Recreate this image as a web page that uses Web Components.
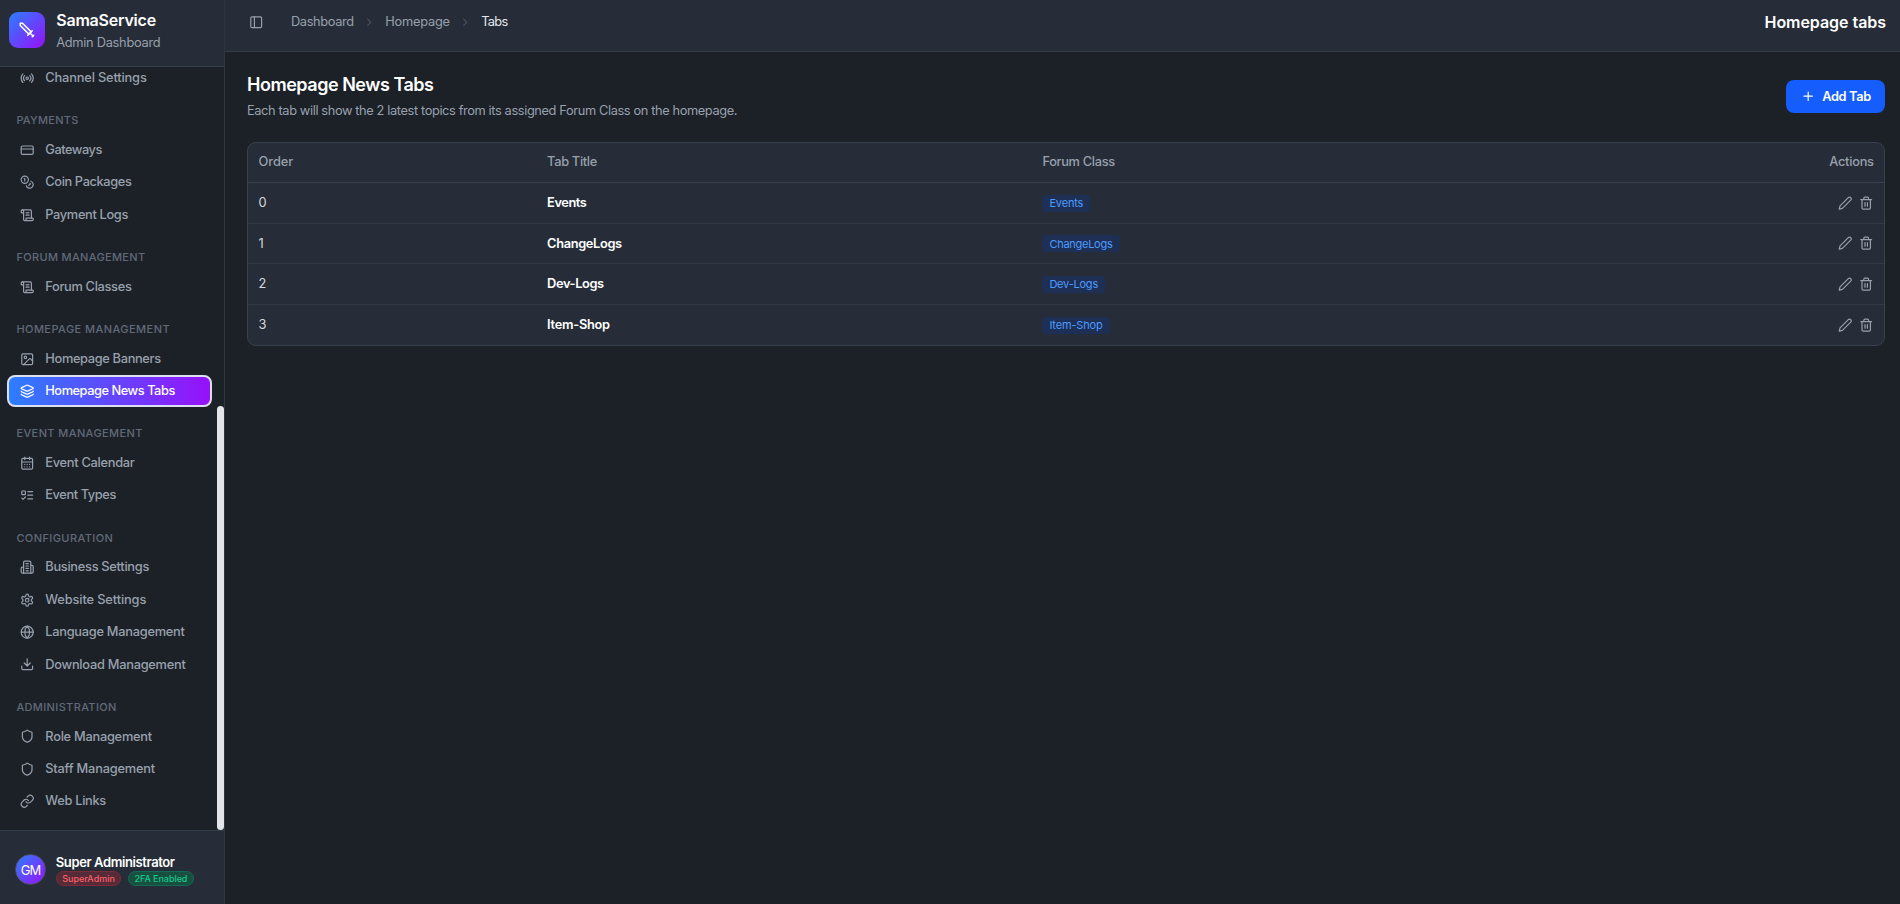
<!DOCTYPE html>
<html lang="en">
<head>
<meta charset="utf-8">
<title>Homepage tabs</title>
<style>
html,body{margin:0;height:100%;overflow:hidden}
body{background:#1c2128;color:#fff;font-family:Inter,"Liberation Sans",sans-serif;font-size:12.8px;line-height:20px}
</style>
</head>
<body>
<admin-app></admin-app>
<script>
const ICONS = {
 sword:'<path d="m11 19-6-6"/><path d="m5 21-2-2"/><path d="m8 16-4 4"/><path d="M9.5 17.5 21 6V3h-3L6.5 14.5"/>',
 radio:'<path d="M4.9 19.1C1 15.2 1 8.8 4.9 4.9"/><path d="M7.8 16.2c-2.3-2.3-2.3-6.1 0-8.5"/><circle cx="12" cy="12" r="2"/><path d="M16.2 7.8c2.3 2.3 2.3 6.1 0 8.5"/><path d="M19.1 4.9C23 8.8 23 15.1 19.1 19"/>',
 card:'<rect width="20" height="14" x="2" y="5" rx="2"/><path d="M2 10h20"/>',
 coins:'<circle cx="8" cy="8" r="6"/><path d="M18.09 10.37A6 6 0 1 1 10.34 18"/><path d="M7 6h1v4"/><path d="m16.71 13.88.7.71-2.82 2.82"/>',
 scroll:'<path d="M15 12h-5"/><path d="M15 8h-5"/><path d="M19 17V5a2 2 0 0 0-2-2H4"/><path d="M8 21h12a2 2 0 0 0 2-2v-1a1 1 0 0 0-1-1H11a1 1 0 0 0-1 1v1a2 2 0 1 1-4 0V5a2 2 0 1 0-4 0v2a1 1 0 0 0 1 1h3"/>',
 image:'<rect width="18" height="18" x="3" y="3" rx="2"/><circle cx="9" cy="9" r="2"/><path d="m21 15-3.1-3.1a2 2 0 0 0-2.8 0L6 21"/>',
 layers:'<path d="M12.83 2.18a2 2 0 0 0-1.66 0L2.6 6.08a1 1 0 0 0 0 1.83l8.58 3.91a2 2 0 0 0 1.66 0l8.58-3.9a1 1 0 0 0 0-1.83z"/><path d="M2 12a1 1 0 0 0 .58.91l8.6 3.91a2 2 0 0 0 1.65 0l8.58-3.9A1 1 0 0 0 22 12"/><path d="M2 17a1 1 0 0 0 .58.91l8.6 3.91a2 2 0 0 0 1.65 0l8.58-3.9A1 1 0 0 0 22 17"/>',
 calendar:'<path d="M8 2v4M16 2v4"/><rect width="18" height="18" x="3" y="4" rx="2"/><path d="M3 10h18M8 14h.01M12 14h.01M16 14h.01M8 18h.01M12 18h.01M16 18h.01"/>',
 todo:'<rect x="3" y="5" width="6" height="6" rx="1"/><path d="m3 17 2 2 4-4M13 6h8M13 12h8M13 18h8"/>',
 building:'<path d="M6 22V4a2 2 0 0 1 2-2h8a2 2 0 0 1 2 2v18Z"/><path d="M6 12H4a2 2 0 0 0-2 2v6a2 2 0 0 0 2 2h2"/><path d="M18 9h2a2 2 0 0 1 2 2v9a2 2 0 0 1-2 2h-2"/><path d="M10 6h4M10 10h4M10 14h4M10 18h4"/>',
 gear:'<path d="M12.22 2h-.44a2 2 0 0 0-2 2v.18a2 2 0 0 1-1 1.73l-.43.25a2 2 0 0 1-2 0l-.15-.08a2 2 0 0 0-2.73.73l-.22.38a2 2 0 0 0 .73 2.73l.15.1a2 2 0 0 1 1 1.72v.51a2 2 0 0 1-1 1.74l-.15.09a2 2 0 0 0-.73 2.73l.22.38a2 2 0 0 0 2.73.73l.15-.08a2 2 0 0 1 2 0l.43.25a2 2 0 0 1 1 1.73V20a2 2 0 0 0 2 2h.44a2 2 0 0 0 2-2v-.18a2 2 0 0 1 1-1.73l.43-.25a2 2 0 0 1 2 0l.15.08a2 2 0 0 0 2.73-.73l.22-.39a2 2 0 0 0-.73-2.73l-.15-.08a2 2 0 0 1-1-1.74v-.5a2 2 0 0 1 1-1.74l.15-.09a2 2 0 0 0 .73-2.73l-.22-.38a2 2 0 0 0-2.73-.73l-.15.08a2 2 0 0 1-2 0l-.43-.25a2 2 0 0 1-1-1.73V4a2 2 0 0 0-2-2z"/><circle cx="12" cy="12" r="3"/>',
 globe:'<circle cx="12" cy="12" r="10"/><path d="M12 2a14.5 14.5 0 0 0 0 20 14.5 14.5 0 0 0 0-20"/><path d="M2 12h20"/>',
 download:'<path d="M21 15v4a2 2 0 0 1-2 2H5a2 2 0 0 1-2-2v-4"/><path d="m7 10 5 5 5-5M12 15V3"/>',
 shield:'<path d="M20 13c0 5-3.5 7.5-7.66 8.95a1 1 0 0 1-.67-.01C7.5 20.5 4 18 4 13V6a1 1 0 0 1 1-1c2 0 4.5-1.2 6.24-2.72a1.17 1.17 0 0 1 1.52 0C14.51 3.81 17 5 19 5a1 1 0 0 1 1 1z"/>',
 link:'<path d="M10 13a5 5 0 0 0 7.54.54l3-3a5 5 0 0 0-7.07-7.07l-1.72 1.71"/><path d="M14 11a5 5 0 0 0-7.54-.54l-3 3a5 5 0 0 0 7.07 7.07l1.71-1.71"/>',
 panel:'<rect width="18" height="18" x="3" y="3" rx="2"/><path d="M9 3v18"/>',
 chevron:'<path d="m9 18 6-6-6-6"/>',
 plus:'<path d="M5 12h14M12 5v14"/>',
 pencil:'<path d="M21.174 6.812a1 1 0 0 0-3.986-3.987L3.842 16.174a2 2 0 0 0-.5.83l-1.321 4.352a.5.5 0 0 0 .623.622l4.353-1.32a2 2 0 0 0 .83-.497z"/>',
 trash:'<path d="M3 6h18M19 6v14a2 2 0 0 1-2 2H7a2 2 0 0 1-2-2V6M8 6V4a2 2 0 0 1 2-2h4a2 2 0 0 1 2 2v2M10 11v6M14 11v6"/>'
};
const define = (name, css, html, setup) => customElements.define(name, class extends HTMLElement {
  connectedCallback(){
    if(this.shadowRoot) return;
    const root = this.attachShadow({mode:'open'});
    root.innerHTML = `<style>*{box-sizing:border-box}${css}</style>${typeof html==='function'?html(this):html}`;
    if(setup) setup(this, root);
  }
});

define('ui-icon', `:host{display:block;flex:none;width:14.4px;height:14.4px}svg{display:block;width:100%;height:100%;fill:none;stroke:currentColor;stroke-width:2;stroke-linecap:round;stroke-linejoin:round}`,
  el => `<svg viewBox="0 0 24 24">${ICONS[el.getAttribute('name')]}</svg>`);

// A single-line label that tracks its letters to fill the width given in its "w" attribute.
define('ui-label', `:host{display:inline-block;white-space:nowrap;flex:none}span{display:inline-block}`, '<span><slot></slot></span>', (el, root) => {
  const w = parseFloat(el.getAttribute('w'));
  if(!w) return;
  const span = root.querySelector('span');
  span.style.letterSpacing = '0px';
  const n = el.textContent.length;
  const gap = (w - span.getBoundingClientRect().width) / Math.max(1, n - 1);
  span.style.letterSpacing = gap + 'px';
  span.style.marginRight = -gap + 'px';
});

define('nav-item', `:host{box-sizing:border-box;display:flex;align-items:center;height:31.4px;margin:0 12.5px 1px 7px;padding-left:13px;gap:10.9px;color:#98a0ac;font-weight:500;border-radius:8px}
:host([active]){color:#fff;background:linear-gradient(90deg,#2b7fff,#9810fa) border-box;border:2px solid #dcdff0;padding-left:11px}`,
  el => `<ui-icon name="${el.getAttribute('icon')}"></ui-icon><ui-label w="${el.getAttribute('w')}">${el.getAttribute('label')}</ui-label>`);

define('nav-group', `:host{display:block}.t{display:flex;align-items:center;height:27.2px;margin-top:13.4px;padding:0 0 .6px 16.4px;font-size:11px;font-weight:500;color:#616977}`,
  el => `<div class="t"><ui-label w="${el.getAttribute('w')}">${el.getAttribute('label')}</ui-label></div><slot></slot>`);

define('user-badge', `:host{display:flex;align-items:center;height:15px;padding:0 5.4px;border-radius:8px;font-size:9px;line-height:13px;font-weight:500;border:1px solid #7d2c37;background:#562b37;color:#fb6069}
:host([ok]){border-color:#116b56;background:#17503f;color:#14c98e}`, '<slot></slot>');

define('side-bar', `:host{box-sizing:border-box;display:flex;flex-direction:column;width:225px;height:100%;border-right:1px solid #2e3540;background:#1c2128}
.head{display:flex;height:67px;flex:none;padding:12px 9px;gap:11.2px;background:#262d38;border-bottom:1px solid #353d49}
.logo{width:36px;height:36px;border-radius:9px;background:linear-gradient(135deg,#2b7fff,#9810fa);display:flex;align-items:center;justify-content:center}
.logo ui-icon{width:18px;height:18px;transform:scaleX(-1)}
.brand{display:flex;flex-direction:column}
.brand .a{font-size:16px;font-weight:600;line-height:20px;margin-top:-2px}.brand .b{color:#98a0ac;line-height:18px;margin-top:4px}
.nav{flex:1;min-height:0;overflow:hidden;display:flex}
.list{flex:1;margin-top:-4.7px}
.track{width:7px;flex:none;padding-top:338.5px;margin-left:-7px}.thumb{height:424px;border-radius:4px;background:#e2e5e9}
.foot{height:74px;flex:none;border-top:1px solid #353d49;background:#262d38;display:flex;padding-left:15.4px;padding-top:22px;gap:9.4px}
.av{width:31px;height:31px;margin-top:1px;border-radius:50%;border:1.5px solid #4a5063;background:linear-gradient(135deg,#2b7fff,#9810fa);display:flex;align-items:center;justify-content:center;font-size:13px}
.name{font-weight:600;font-size:13px;line-height:18px}
.badges{display:flex;gap:6.8px}`,
`<div class="head"><div class="logo"><ui-icon name="sword"></ui-icon></div><div class="brand"><ui-label class="a" w="100">SamaService</ui-label><ui-label class="b" w="104.4">Admin Dashboard</ui-label></div></div>
<div class="nav"><div class="list">
<nav-item icon="radio" label="Channel Settings" w="101.5"></nav-item>
<nav-group label="PAYMENTS" w="62"><nav-item icon="card" label="Gateways" w="57"></nav-item><nav-item icon="coins" label="Coin Packages" w="86.5"></nav-item><nav-item icon="scroll" label="Payment Logs" w="83"></nav-item></nav-group>
<nav-group label="FORUM MANAGEMENT" w="128.8"><nav-item icon="scroll" label="Forum Classes" w="86.5"></nav-item></nav-group>
<nav-group label="HOMEPAGE MANAGEMENT" w="153.2"><nav-item icon="image" label="Homepage Banners" w="115.8"></nav-item><nav-item active icon="layers" label="Homepage News Tabs" w="130"></nav-item></nav-group>
<nav-group label="EVENT MANAGEMENT" w="126"><nav-item icon="calendar" label="Event Calendar" w="89.5"></nav-item><nav-item icon="todo" label="Event Types" w="71"></nav-item></nav-group>
<nav-group label="CONFIGURATION" w="96.5"><nav-item icon="building" label="Business Settings" w="104"></nav-item><nav-item icon="gear" label="Website Settings" w="101"></nav-item><nav-item icon="globe" label="Language Management" w="139.5"></nav-item><nav-item icon="download" label="Download Management" w="140.5"></nav-item></nav-group>
<nav-group label="ADMINISTRATION" w="100"><nav-item icon="shield" label="Role Management" w="106.8"></nav-item><nav-item icon="shield" label="Staff Management" w="109.8"></nav-item><nav-item icon="link" label="Web Links" w="61"></nav-item></nav-group>
</div><div class="track"><div class="thumb"></div></div></div>
<div class="foot"><div class="av"><ui-label w="20.5">GM</ui-label></div><div><div class="name"><ui-label w="119.2">Super Administrator</ui-label></div><div class="badges"><user-badge><ui-label w="52.7">SuperAdmin</ui-label></user-badge><user-badge ok><ui-label w="53">2FA Enabled</ui-label></user-badge></div></div></div>`);

define('top-bar', `:host{box-sizing:border-box;display:flex;align-items:center;height:52px;flex:none;background:#262d38;border-bottom:1px solid #353d49;padding:0 14px 7.4px 24px;color:#98a0ac}
.c{margin:0 9.3px;width:12.6px;height:12.6px;color:#4c5462}.p{margin-right:27.5px}.now{color:#e4e7ec}.t{margin-left:auto;color:#fff;font-weight:600;font-size:16px}`,
`<ui-icon class="p" name="panel"></ui-icon><ui-label w="63.3">Dashboard</ui-label><ui-icon class="c" name="chevron"></ui-icon><ui-label w="64.6">Homepage</ui-label><ui-icon class="c" name="chevron"></ui-icon><ui-label class="now" w="27">Tabs</ui-label><ui-label class="t" w="121.5">Homepage tabs</ui-label>`);

define('data-row', `:host{box-sizing:border-box;display:grid;grid-template-columns:288.5px 495.3px 1fr auto;align-items:center;height:40.6px;padding:0 10px 0 10.6px;border-bottom:1px solid #303844}
:host([last]){border-bottom:0}
.n,.t,.tag{margin-top:.7px}
.n{color:#d5d9df}.t{font-weight:600}
.tag{display:flex;width:max-content;align-items:center;height:17px;padding:0 7px;border-radius:4px;background:#1d2f55;color:#4d9bff;font-size:11px}
.acts{display:flex;gap:6.6px;color:#98a0ac;padding-right:.8px}`,
el => `<ui-label class="n">${el.getAttribute('order')}</ui-label><ui-label class="t" w="${el.getAttribute('w')}">${el.getAttribute('label')}</ui-label><div><span class="tag"><ui-label w="${el.getAttribute('tw')}">${el.getAttribute('label')}</ui-label></span></div><div class="acts"><ui-icon name="pencil"></ui-icon><ui-icon name="trash"></ui-icon></div>`);

define('data-table', `:host{display:block;border:1px solid #38414e;border-radius:9px;background:#262d38;overflow:hidden}
.h{display:grid;grid-template-columns:288.5px 495.3px 1fr auto;align-items:center;height:40px;padding:0 10px 2px 10.6px;border-bottom:1px solid #38414e;color:#98a0ac;font-weight:500}`,
`<div class="h"><ui-label w="34.6">Order</ui-label><ui-label w="50.2">Tab Title</ui-label><ui-label w="72.8">Forum Class</ui-label><ui-label w="44.8">Actions</ui-label></div><slot></slot>`);

define('add-button', `:host{box-sizing:border-box;display:flex;align-items:center;width:99px;height:33px;padding-left:15px;border-radius:8px;background:#155dfc;font-weight:600;gap:6.8px}`, `<ui-icon name="plus"></ui-icon><ui-label w="49">Add Tab</ui-label>`);

define('page-body', `:host{display:block;padding:20px 15px 0 22px}.top{display:flex;justify-content:space-between;height:70px}
.ti{font-size:18px;line-height:26px;font-weight:600}.s{color:#98a0ac;margin-top:3px}add-button{margin-top:8px}`,
`<div class="top"><div><div class="ti"><ui-label w="187">Homepage News Tabs</ui-label></div><div class="s"><ui-label w="490.5">Each tab will show the 2 latest topics from its assigned Forum Class on the homepage.</ui-label></div></div><add-button></add-button></div>
<data-table><data-row order="0" label="Events" w="39.8" tw="34"></data-row><data-row order="1" label="ChangeLogs" w="75" tw="63.3"></data-row><data-row order="2" label="Dev-Logs" w="57" tw="48.8"></data-row><data-row last order="3" label="Item-Shop" w="63" tw="53.3"></data-row></data-table>`);

define('admin-app', `:host{display:flex;height:904px;width:1900px}main{flex:1;display:flex;flex-direction:column;min-width:0}`, `<side-bar></side-bar><main><top-bar></top-bar><page-body></page-body></main>`);
</script>
</body>
</html>
